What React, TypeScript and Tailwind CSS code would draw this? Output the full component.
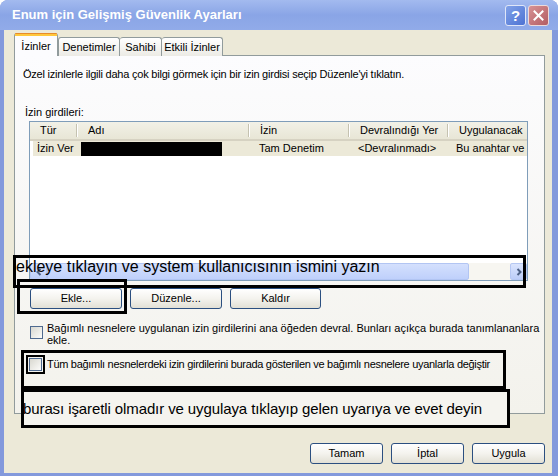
import React from 'react';

const uiFont = { fontFamily: '"Liberation Sans", Arial, sans-serif' };

const XpButton: React.FC<{ label: string; className: string }> = ({ label, className }) => (
  <div
    className={`flex h-[21px] items-center justify-center rounded-[3px] border border-[#2b4f80] bg-linear-to-b from-white via-[#f4f3ee] to-[#e2e0d5] text-[11px] text-black ${className}`}
  >
    {label}
  </div>
);

const CheckBox: React.FC = () => (
  <span className="block h-[13px] w-[13px] shrink-0 border border-[#4f6a8f] bg-linear-to-br from-[#d9d8d0] to-[#fcfcfa]" />
);

const HeaderCell: React.FC<{ label: string; className: string; sep?: boolean }> = ({ label, className, sep = true }) => (
  <div className={`flex h-full items-center ${className}`}>
    <span className="flex-1 whitespace-nowrap">{label}</span>
    {sep && <span className="h-[13px] w-[2px] border-l border-r border-l-[#c5c2b0] border-r-white" />}
  </div>
);

export default function App() {
  return (
    <div className="relative h-[476px] w-[558px] overflow-hidden bg-white" style={uiFont}>
      <div className="flex h-full flex-col rounded-t-[8px] bg-[#8399dc]">
        {/* Title bar */}
        <div className="flex h-[30px] shrink-0 items-center rounded-t-[8px] bg-linear-to-b from-[#a3baef] via-[#8aa5e6] to-[#91abe9] pl-[12px] pr-[9px]">
          <span className="text-[13px] font-bold text-white">Enum için Gelişmiş Güvenlik Ayarları</span>
          <div className="ml-auto flex gap-[2px]">
            <div className="flex h-[21px] w-[21px] items-center justify-center rounded-[3px] border border-[#dfe6f8] bg-linear-to-br from-[#82a2e8] to-[#4d72d3] text-[15px] font-bold leading-none text-white">
              ?
            </div>
            <div className="flex h-[21px] w-[21px] items-center justify-center rounded-[3px] border border-[#ecdada] bg-linear-to-br from-[#d79295] to-[#b35d63]">
              <svg width="11" height="11" viewBox="0 0 11 11">
                <path d="M1.5 1.5 L9.5 9.5 M9.5 1.5 L1.5 9.5" stroke="white" strokeWidth="2" strokeLinecap="square" />
              </svg>
            </div>
          </div>
        </div>

        {/* Body */}
        <div className="mb-[3px] ml-[4px] mr-[6px] flex flex-1 flex-col bg-[#ece9d8] pl-[10px] pr-[7px] pt-[3px] text-[11px] text-black">
          {/* Tabs */}
          <div className="relative z-10 -mb-px flex h-[23px] items-end">
            <div className="flex h-[23px] w-[44px] flex-col rounded-t-[3px] border-x border-[#919b9c] bg-[#fcfcfe]">
              <span className="h-[1px] rounded-t-[3px] bg-[#e68b2c]" />
              <span className="h-[2px] bg-[#ffc73c]" />
              <span className="flex flex-1 items-center justify-center pt-px">İzinler</span>
            </div>
            <div className="flex h-[19px] w-[62px] items-center justify-center rounded-t-[3px] border border-b-0 border-[#919b9c] bg-linear-to-b from-white to-[#ecebe5] pt-px">
              Denetimler
            </div>
            <div className="flex h-[19px] w-[42px] items-center justify-center rounded-t-[3px] border border-b-0 border-l-0 border-[#919b9c] bg-linear-to-b from-white to-[#ecebe5] pt-px">
              Sahibi
            </div>
            <div className="flex h-[19px] w-[61px] items-center justify-center rounded-t-[3px] border border-b-0 border-l-0 border-[#919b9c] bg-linear-to-b from-white to-[#ecebe5] pt-px">
              Etkili İzinler
            </div>
          </div>

          {/* Tab panel */}
          <div className="flex h-[359px] flex-col border border-[#919b9c] bg-linear-to-b from-[#fcfcfe] to-[#f3f2ec] leading-[13px]">
            <p className="ml-[8px] mt-[12px] whitespace-nowrap tracking-[-0.22px]">
              Özel izinlerle ilgili daha çok bilgi görmek için bir izin girdisi seçip Düzenle'yi tıklatın.
            </p>
            <p className="ml-[10px] mt-[25px]">İzin girdileri:</p>

            {/* List view */}
            <div className="ml-[14px] mt-[2px] flex h-[160px] w-[499px] flex-col overflow-hidden border border-[#7f9db9] bg-white">
              <div className="flex h-[19px] shrink-0 border-b-[2px] border-[#d6d2c2] bg-linear-to-b from-[#f2f1e7] to-[#e8e6d6]">
                <HeaderCell label="Tür" className="w-[48px] pl-[10px]" />
                <HeaderCell label="Adı" className="w-[172px] pl-[10px]" />
                <HeaderCell label="İzin" className="w-[100px] pl-[10px]" />
                <HeaderCell label="Devralındığı Yer" className="w-[99px] pl-[10px]" />
                <HeaderCell label="Uygulanacak" className="flex-1 pl-[10px]" sep={false} />
              </div>
              <div className="ml-[3px] flex h-[15px] shrink-0 items-center bg-[#ece9d8] whitespace-nowrap">
                <span className="w-[45px] pl-[4px]">İzin Ver</span>
                <span className="w-[172px] pl-[3px]">
                  <span className="block h-[14px] w-[141px] bg-black" />
                </span>
                <span className="w-[100px] pl-[9px]">Tam Denetim</span>
                <span className="w-[99px] pl-[8px]">&lt;Devralınmadı&gt;</span>
                <span className="min-w-0 flex-1 overflow-hidden pl-[7px]">Bu anahtar ve alt anahtarlar</span>
              </div>
              <div className="flex-1" />
              {/* Horizontal scrollbar */}
              <div className="flex h-[17px] shrink-0 bg-[#f7f6f1]">
                <div className="flex w-[17px] items-center justify-center rounded-[2px] border border-[#b6c8f3] bg-linear-to-b from-[#dbe5fd] to-[#bccdf8]">
                  <svg width="6" height="8" viewBox="0 0 6 8">
                    <path d="M4.5 1 L1.5 4 L4.5 7" fill="none" stroke="#4d6185" strokeWidth="2" />
                  </svg>
                </div>
                <div className="w-[422px] rounded-[2px] border border-[#b2c5f3] bg-linear-to-b from-[#d4e0fd] to-[#bfd0fb]" />
                <div className="flex-1" />
                <div className="flex w-[17px] items-center justify-center rounded-[2px] border border-[#b6c8f3] bg-linear-to-b from-[#dbe5fd] to-[#bccdf8]">
                  <svg width="6" height="8" viewBox="0 0 6 8">
                    <path d="M1.5 1 L4.5 4 L1.5 7" fill="none" stroke="#4d6185" strokeWidth="2" />
                  </svg>
                </div>
              </div>
            </div>

            {/* Add / Edit / Remove */}
            <div className="ml-[15px] mt-[7px] flex gap-[8px]">
              <XpButton label="Ekle..." className="w-[92px]" />
              <XpButton label="Düzenle..." className="w-[92px]" />
              <XpButton label="Kaldır" className="w-[91px]" />
            </div>

            {/* Inherit checkbox */}
            <div className="ml-[15px] mt-[13px] flex gap-[4px] leading-[12px]">
              <span className="mt-[4px]">
                <CheckBox />
              </span>
              <p>
                Bağımlı nesnelere uygulanan izin girdilerini ana öğeden devral. Bunları açıkça burada tanımlananlara
                <br />
                ekle.
              </p>
            </div>

            {/* Replace checkbox */}
            <div className="ml-[11px] mt-[9px] flex items-center gap-[2px]">
              <span className="border-2 border-black p-px">
                <CheckBox />
              </span>
              <p className="whitespace-nowrap tracking-[-0.3px]">
                Tüm bağımlı nesnelerdeki izin girdilerini burada gösterilen ve bağımlı nesnelere uyanlarla değiştir
              </p>
            </div>
          </div>

          {/* Dialog buttons */}
          <div className="mt-[29px] flex justify-end gap-[8px]">
            <XpButton label="Tamam" className="w-[73px]" />
            <XpButton label="İptal" className="w-[73px]" />
            <XpButton label="Uygula" className="w-[73px]" />
          </div>
        </div>
      </div>

      {/* Annotations drawn over the screenshot */}
      <div className="absolute left-[13px] top-[255px] h-[33px] w-[513px] border-[3px] border-black text-[16px] leading-[18px] text-black">
        <span className="whitespace-nowrap">ekleye tıklayın ve system kullanıcısının ismini yazın</span>
      </div>
      <div className="absolute left-[17px] top-[279px] h-[35px] w-[110px] border-[3px] border-black" />
      <div className="absolute left-[21px] top-[350px] h-[39px] w-[485px] border-[3px] border-black" />
      <div className="absolute left-[21px] top-[389px] h-[39px] w-[489px] border-[3px] border-black bg-[#f5f4ef] pt-[8px] text-[15px] leading-[17px] tracking-[-0.1px] text-black">
        <span className="-ml-px whitespace-nowrap">burası işaretli olmadır ve uygulaya tıklayıp gelen uyarıya ve evet  deyin</span>
      </div>
    </div>
  );
}
